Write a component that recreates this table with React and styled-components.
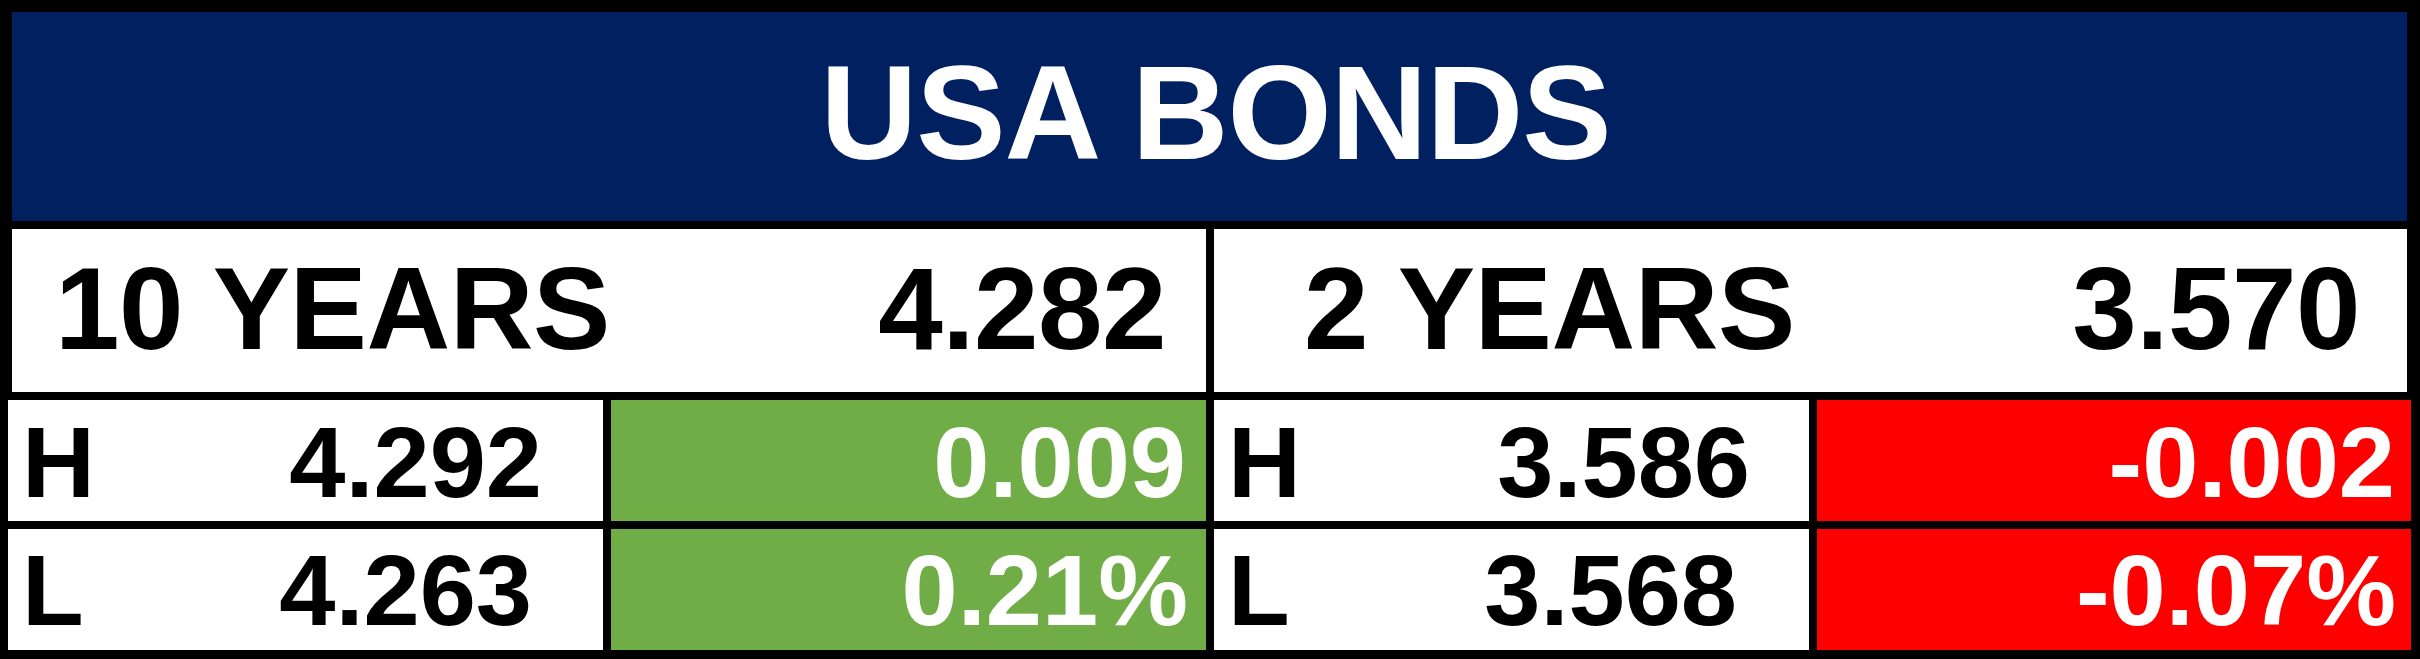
import styled, { createGlobalStyle } from "styled-components";

const GlobalStyle = createGlobalStyle`
  html, body {
    margin: 0;
    padding: 0;
    background: #fff;
  }
`;

const Board = styled.div`
  width: 2420px;
  height: 659px;
  box-sizing: border-box;
  background: #000;
  padding: 12px 0 9px;
  display: flex;
  flex-direction: column;
  gap: 8px;
  font-family: "Liberation Sans", Arial, sans-serif;
  font-weight: 700;
`;

const Title = styled.h1`
  margin: 0 13px 0 12px;
  height: 209px;
  box-sizing: border-box;
  padding: 0 0 8px 12px;
  background: #002060;
  color: #fff;
  font-size: 134px;
  line-height: 1;
  font-weight: 700;
  display: flex;
  align-items: center;
  justify-content: center;
  letter-spacing: -1px;
`;

const TopRow = styled.div`
  margin: 0 13px 0 12px;
  height: 163px;
  display: grid;
  grid-template-columns: 1194px 1193px;
  gap: 8px;
`;

const BottomRow = styled.div`
  margin: 0 9px 0 8px;
  height: 121px;
  display: grid;
  grid-template-columns: 595px 595px 595px 594px;
  gap: 8px;
`;

const Cell = styled.div`
  box-sizing: border-box;
  display: flex;
  align-items: center;
  justify-content: space-between;
  background: ${({ tone }) =>
    tone === "up" ? "#70ad47" : tone === "down" ? "#ff0000" : "#fff"};
  color: ${({ tone }) => (tone ? "#fff" : "#000")};
  font-size: ${({ big }) => (big ? "116px" : "101px")};
  letter-spacing: ${({ big }) => (big ? "-0.5px" : "0")};
  line-height: 1;
  padding: ${({ big, shift = 0 }) =>
      big ? `0 0 ${3 - shift}px` : `${2 + shift}px 0 0`};
  padding-left: ${({ pl = 0 }) => pl}px;
  padding-right: ${({ pr = 0 }) => pr}px;
  white-space: nowrap;
`;

const ten = { label: "10 YEARS", value: "4.282", high: "4.292", low: "4.263", chg: "0.009", pct: "0.21%" };
const two = { label: "2 YEARS", value: "3.570", high: "3.586", low: "3.568", chg: "-0.002", pct: "-0.07%" };

export default function App() {
  return (
    <>
      <GlobalStyle />
      <Board>
        <Title>USA BONDS</Title>
        <TopRow>
          <Cell big pl={43} pr={40}>
            <span>{ten.label}</span>
            <span>{ten.value}</span>
          </Cell>
          <Cell big pl={90} pr={47}>
            <span>{two.label}</span>
            <span>{two.value}</span>
          </Cell>
        </TopRow>
        <BottomRow>
          <Cell pl={14} pr={61} shift={1}>
            <span>H</span>
            <span>{ten.high}</span>
          </Cell>
          <Cell tone="up" pr={20} shift={1}>
            <span />
            <span>{ten.chg}</span>
          </Cell>
          <Cell pl={14} pr={59} shift={1}>
            <span>H</span>
            <span>{two.high}</span>
          </Cell>
          <Cell tone="down" pr={16} shift={1}>
            <span />
            <span>{two.chg}</span>
          </Cell>
        </BottomRow>
        <BottomRow>
          <Cell pl={14} pr={71}>
            <span>L</span>
            <span>{ten.low}</span>
          </Cell>
          <Cell tone="up" pr={18}>
            <span />
            <span>{ten.pct}</span>
          </Cell>
          <Cell pl={14} pr={72}>
            <span>L</span>
            <span>{two.low}</span>
          </Cell>
          <Cell tone="down" pr={15}>
            <span />
            <span>{two.pct}</span>
          </Cell>
        </BottomRow>
      </Board>
    </>
  );
}
